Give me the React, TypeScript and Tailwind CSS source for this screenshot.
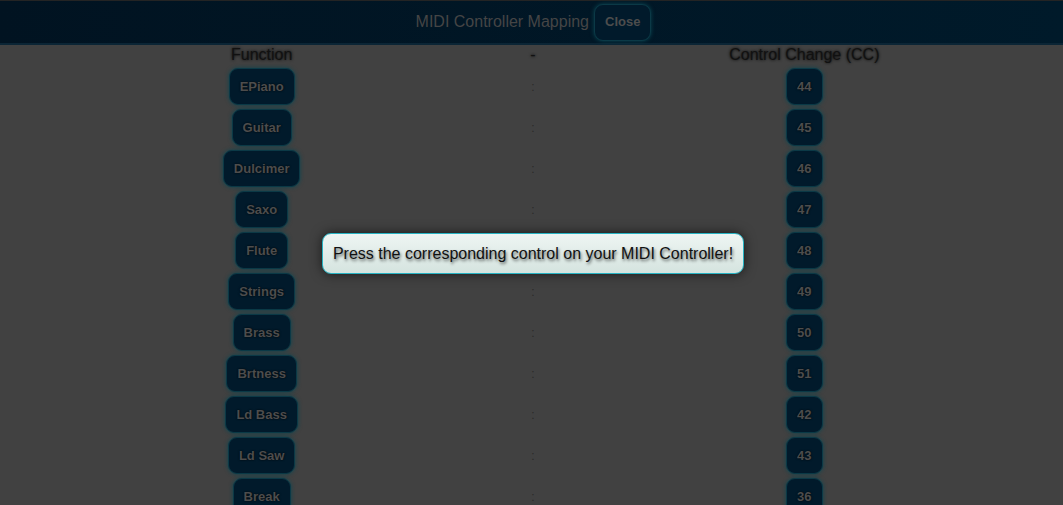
const rows: [string, number][] = [
  ['EPiano', 44],
  ['Guitar', 45],
  ['Dulcimer', 46],
  ['Saxo', 47],
  ['Flute', 48],
  ['Strings', 49],
  ['Brass', 50],
  ['Brtness', 51],
  ['Ld Bass', 42],
  ['Ld Saw', 43],
  ['Break', 36],
  ['Fill', 37],
];

function MapButton({ label }: { label: string | number }) {
  return (
    <button className="h-[37px] min-w-[37px] px-[10px] rounded-[9px] bg-[#011a2b] border border-[#0b3946] shadow-[0_0_4px_#0a4652] text-[13px] font-bold text-[#4d4d4d] [text-shadow:0_0_2px_#000]">
      {label}
    </button>
  );
}

export default function App() {
  return (
    <div className="relative bg-[#414141] font-['Liberation_Sans',Arial,sans-serif] overflow-hidden h-[505px]">
      <header className="h-[45px] border-t border-[#242424] border-b-2 border-b-[#0b2535] bg-gradient-to-r from-[#011321] to-[#001a2a] flex items-center justify-center gap-[5px] pl-[4px]">
        <span className="text-[16px] text-[#454545]">MIDI Controller Mapping</span>
        <button className="h-[37px] px-[10px] rounded-[9px] bg-[#011a2b] border border-[#0b3946] shadow-[0_0_4px_#0a4652] text-[13px] font-bold text-[#4d4d4d]">
          Close
        </button>
      </header>

      <div className="w-[814px] ml-[126px] grid grid-cols-3 text-center">
        <div className="text-[16px] leading-[20px] text-[#111] [text-shadow:0_0_3px_#000]">Function</div>
        <div className="text-[16px] leading-[20px] text-[#111] [text-shadow:0_0_3px_#000]">-</div>
        <div className="text-[16px] leading-[20px] text-[#111] [text-shadow:0_0_3px_#000]">Control Change (CC)</div>
      </div>

      <div className="w-[814px] ml-[126px] flex flex-col gap-[4px] mt-[3px]">
        {rows.map(([name, cc]) => (
          <div key={name} className="grid grid-cols-3 items-center text-center">
            <div className="flex justify-center">
              <MapButton label={name} />
            </div>
            <div className="text-[12px] text-[#2a2a2a]">:</div>
            <div className="flex justify-center">
              <MapButton label={cc} />
            </div>
          </div>
        ))}
      </div>

      <div className="absolute left-[322px] top-[233px] w-[422px] h-[41px] rounded-[9px] border border-[#27b3c3] bg-gradient-to-b from-[#eef5f3] to-[#d5e4df] shadow-[0_0_12px_rgba(0,0,0,0.6)] flex items-center justify-center">
        <span className="text-[16px] text-[#111] [text-shadow:1px_2px_3px_rgba(0,0,0,0.6)]">
          Press the corresponding control on your MIDI Controller!
        </span>
      </div>
    </div>
  );
}
